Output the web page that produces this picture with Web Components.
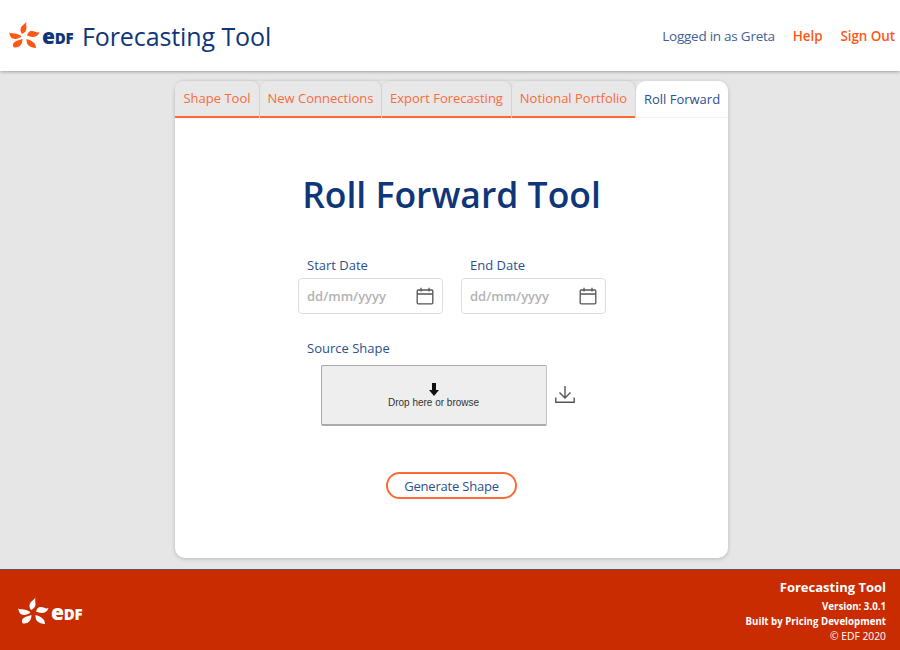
<!DOCTYPE html>
<html lang="en">
<head>
<meta charset="utf-8">
<title>Forecasting Tool</title>
<style>
    html, body { margin: 0; height: 100%; }
    body {
        background: #e6e6e6;
        font-family: "Open Sans", "Noto Sans", "Liberation Sans", sans-serif;
        overflow: hidden;
    }
</style>
</head>
<body>
<app-page>
    <app-header slot="header">
        <span slot="title">Forecasting Tool</span>
        <span slot="user">Logged in as Greta</span>
        <a slot="links">Help</a>
        <a slot="links">Sign Out</a>
    </app-header>
    <tab-card slot="main">
        <tab-item slot="tabs" style="--w:84px">Shape Tool</tab-item>
        <tab-item slot="tabs" style="--w:121px">New Connections</tab-item>
        <tab-item slot="tabs" style="--w:129px">Export Forecasting</tab-item>
        <tab-item slot="tabs" style="--w:123px">Notional Portfolio</tab-item>
        <tab-item slot="tabs" style="--w:92px" active>Roll Forward</tab-item>
        <roll-form>
            <date-field slot="dates" label="Start Date"></date-field>
            <date-field slot="dates" label="End Date"></date-field>
        </roll-form>
    </tab-card>
    <app-footer slot="footer">
        <strong slot="title">Forecasting Tool</strong>
        <span slot="lines">Version: 3.0.1</span>
        <span slot="lines">Built by Pricing Development</span>
        <span slot="lines" class="light">© EDF 2020</span>
    </app-footer>
</app-page>

<script>
class EdfLogo extends HTMLElement {
    constructor() {
        super()
        this.attachShadow({ mode: "open" })
        this.shadowRoot.innerHTML = `
        <style>
            :host { display: inline-flex; align-items: flex-start; gap: 2px; color: #fe5716; width: 64px; }
            svg { width: 31px; height: 27px; display: block; flex: none; }
            span {
                color: var(--word, #10367a);
                font: 800 15px/16px "Open Sans", sans-serif;
                margin-top: 7px; white-space: nowrap; letter-spacing: -.2px;
            }
            span i { font-style: normal; font-size: 21px; }
        </style>
        <svg viewBox="0 0 31 27" fill="currentColor">
            <path d="M17.5 .5 C16.5 2.5 14 3.5 12.5 5.5 C11 7.5 11 10.5 13 13 C16 11.5 18 9 17.5 6.5 C17.2 4.5 17 2.5 17.5 .5Z"/>
            <path d="M.3 11.5 C3 13 7.5 11.5 12.5 15.2 C10.5 17.5 6.5 18.5 3.5 17.5 C1.5 16.5 .5 14 .3 11.5Z"/>
            <path d="M30.5 11 C27.5 12.5 26 9.5 22 10 C20 10.3 18.5 12.5 18 14.5 C21 16 25 16.5 27.5 15 C29 14 30 12.5 30.5 11Z"/>
            <path d="M13.5 18 C10.5 19 6.5 19.5 4.5 22 C3.8 23.2 4 25 4.5 26.3 C7.5 27 10.5 26 12 23.5 C13 21.8 13.5 20 13.5 18Z"/>
            <path d="M17.5 18 C20.5 18.5 24 20.5 26 23 C26.7 24.2 27 25.8 27 27 C24 27 21 26 19 24 C17.8 22.5 17.4 20 17.5 18Z"/>
        </svg>
        <span><i>e</i>DF</span>
        `
    }
}

class AppPage extends HTMLElement {
    constructor() {
        super()
        this.attachShadow({ mode: "open" })
        this.shadowRoot.innerHTML = `
        <style>
            :host { display: flex; flex-direction: column; height: 650px; }
            main { flex: 1; display: flex; justify-content: center; padding: 10px 0 11px 3px; min-height: 0; }
        </style>
        <slot name="header"></slot>
        <main><slot name="main"></slot></main>
        <slot name="footer"></slot>
        `
    }
}

class AppHeader extends HTMLElement {
    constructor() {
        super()
        this.attachShadow({ mode: "open" })
        this.shadowRoot.innerHTML = `
        <style>
            :host {
                display: flex; align-items: center; justify-content: space-between;
                height: 71px; box-sizing: border-box; padding: 0 5px 0 9px;
                background: #fff; box-shadow: 0 1px 3px rgba(0,0,0,.3);
                position: relative;
            }
            .brand { display: flex; align-items: center; gap: 9px; }
            edf-logo { margin-bottom: 2px; }
            .title { color: #10367a; font-size: 25px; line-height: 32px; letter-spacing: -.1px; }
            .side { display: flex; align-items: center; gap: 18px; font-size: 13.5px; }
            .user { color: #3f5f98; letter-spacing: -.25px; }
            ::slotted(a) { color: #fe5716; font-weight: 600; letter-spacing: -.1px; }
            .links { display: flex; gap: 18px; }
        </style>
        <div class="brand"><edf-logo></edf-logo><div class="title"><slot name="title"></slot></div></div>
        <div class="side">
            <div class="user"><slot name="user"></slot></div>
            <div class="links"><slot name="links"></slot></div>
        </div>
        `
    }
}

class TabCard extends HTMLElement {
    constructor() {
        super()
        this.attachShadow({ mode: "open" })
        this.shadowRoot.innerHTML = `
        <style>
            :host {
                display: flex; flex-direction: column; width: 553px; height: 477px;
                background: #fff; border-radius: 10px;
                box-shadow: 0 1px 4px rgba(0,0,0,.2);
            }
            .tabs { display: flex; gap: 1px; height: 37px; background: #e6e6e6; border-radius: 10px 10px 0 0; }
        </style>
        <div class="tabs"><slot name="tabs"></slot></div>
        <slot></slot>
        `
    }
}

class TabItem extends HTMLElement {
    constructor() {
        super()
        this.attachShadow({ mode: "open" })
        this.shadowRoot.innerHTML = `
        <style>
            :host {
                display: flex; align-items: center; justify-content: center;
                width: var(--w); box-sizing: border-box; height: 37px;
                font-size: 13px; color: #fd6a3c; background: #e8e8e8;
                border-bottom: 2px solid #fe6a35; border-radius: 8px 8px 0 0;
                box-shadow: 1px 0 3px rgba(0,0,0,.1);
                white-space: nowrap; padding-bottom: 1px;
            }
            :host([active]) {
                color: #2c4f8f; background: #fff; box-shadow: none;
                border-bottom: 1px solid #f2f2f2; border-radius: 10px 10px 0 0;
            }
        </style>
        <slot></slot>
        `
    }
}

class DateField extends HTMLElement {
    constructor() {
        super()
        this.attachShadow({ mode: "open" })
        this.shadowRoot.innerHTML = `
        <style>
            :host { display: flex; flex-direction: column; width: 145px; }
            label { color: #2c4f8f; font-size: 13px; line-height: 18px; padding: 0 0 4px 9.5px; }
            .box {
                display: flex; align-items: center; justify-content: space-between;
                height: 36px; box-sizing: border-box; padding: 0 8px 0 8.5px;
                border: 1px solid #ddd; border-radius: 4px;
                color: #b3b3b3; font-size: 13px; font-weight: 600;
            }
            svg { width: 18px; height: 18px; display: block; }
        </style>
        <label>${this.getAttribute("label")}</label>
        <div class="box">
            <span>dd/mm/yyyy</span>
            <svg viewBox="0 0 18 18" fill="none" stroke="#555" stroke-width="1.3">
                <rect x="1.2" y="3" width="15.6" height="13.8" rx="1"/>
                <path d="M1.2 7h15.6M5 .8v3.6M13 .8v3.6"/>
            </svg>
        </div>
        `
    }
}

class DropZone extends HTMLElement {
    constructor() {
        super()
        this.attachShadow({ mode: "open" })
        this.shadowRoot.innerHTML = `
        <style>
            :host {
                display: flex; flex-direction: column; align-items: center; justify-content: center;
                width: 226px; height: 61px; box-sizing: border-box; padding-top: 2px;
                background: #eee; border: 1px solid #aaa; border-width: 1px 1px 2px 1px;
                border-right-color: #c4c4c4;
                border-radius: 2px; color: #333;
                font: 10px/12px "Liberation Sans", Arial, sans-serif;
            }
            svg { width: 10px; height: 13px; display: block; margin-bottom: 1px; }
        </style>
        <svg viewBox="0 0 10 13" fill="#111"><path d="M3 0h4v7h3l-5 6-5-6h3z"/></svg>
        <span>Drop here or browse</span>
        `
    }
}

class RollForm extends HTMLElement {
    constructor() {
        super()
        this.attachShadow({ mode: "open" })
        this.shadowRoot.innerHTML = `
        <style>
            :host { display: flex; flex-direction: column; align-items: center; flex: 1; }
            h1 {
                margin: 51px 0 0; color: #10367a;
                font-size: 35.5px; line-height: 50px; font-weight: 600;
            }
            .dates { display: flex; gap: 18px; margin-top: 37px; }
            .source { width: 308px; margin-top: 25px; }
            .source label { display: block; color: #2c4f8f; font-size: 13px; line-height: 18px; padding-left: 9.5px; }
            .drop { display: flex; align-items: center; gap: 8px; margin: 8px 0 0 23px; }
            .drop svg { width: 20px; height: 17px; display: block; margin-top: -3px; }
            button {
                margin-top: 46px; width: 131px; height: 27px; padding: 0;
                background: #fff; border: 2px solid #fe6a35; border-radius: 14px;
                color: #2c4f8f; font: 13px "Open Sans", sans-serif; letter-spacing: -.2px;
            }
        </style>
        <h1>Roll Forward Tool</h1>
        <div class="dates"><slot name="dates"></slot></div>
        <div class="source">
            <label>Source Shape</label>
            <div class="drop">
                <drop-zone></drop-zone>
                <svg viewBox="0 0 20 17" fill="none" stroke="#555" stroke-width="1.4">
                    <path d="M10 0v12M4.5 6.5l5.5 5.5 5.5-5.5M.8 11.5v4.7h18.4v-4.7"/>
                </svg>
            </div>
        </div>
        <button>Generate Shape</button>
        `
    }
}

class AppFooter extends HTMLElement {
    constructor() {
        super()
        this.attachShadow({ mode: "open" })
        this.shadowRoot.innerHTML = `
        <style>
            :host {
                display: flex; align-items: center; justify-content: space-between;
                height: 81px; box-sizing: border-box; padding: 1px 14px 0 18px;
                background: #c92c00; border-top: 1px solid #6b4a5a; color: #fff;
            }
            edf-logo { --word: #fff; color: #fff; }
            .info { display: flex; flex-direction: column; align-items: flex-end; }
            ::slotted(strong) { font-size: 13px; line-height: 20px; font-weight: 700; margin-bottom: 2px; }
            ::slotted(span) { font-size: 9.7px; line-height: 15px; font-weight: 700; }
            ::slotted(.light) { font-weight: 400; font-size: 10.3px; }
        </style>
        <edf-logo></edf-logo>
        <div class="info"><slot name="title"></slot><slot name="lines"></slot></div>
        `
    }
}

customElements.define("edf-logo", EdfLogo)
customElements.define("app-page", AppPage)
customElements.define("app-header", AppHeader)
customElements.define("tab-card", TabCard)
customElements.define("tab-item", TabItem)
customElements.define("date-field", DateField)
customElements.define("drop-zone", DropZone)
customElements.define("roll-form", RollForm)
customElements.define("app-footer", AppFooter)
</script>
</body>
</html>
